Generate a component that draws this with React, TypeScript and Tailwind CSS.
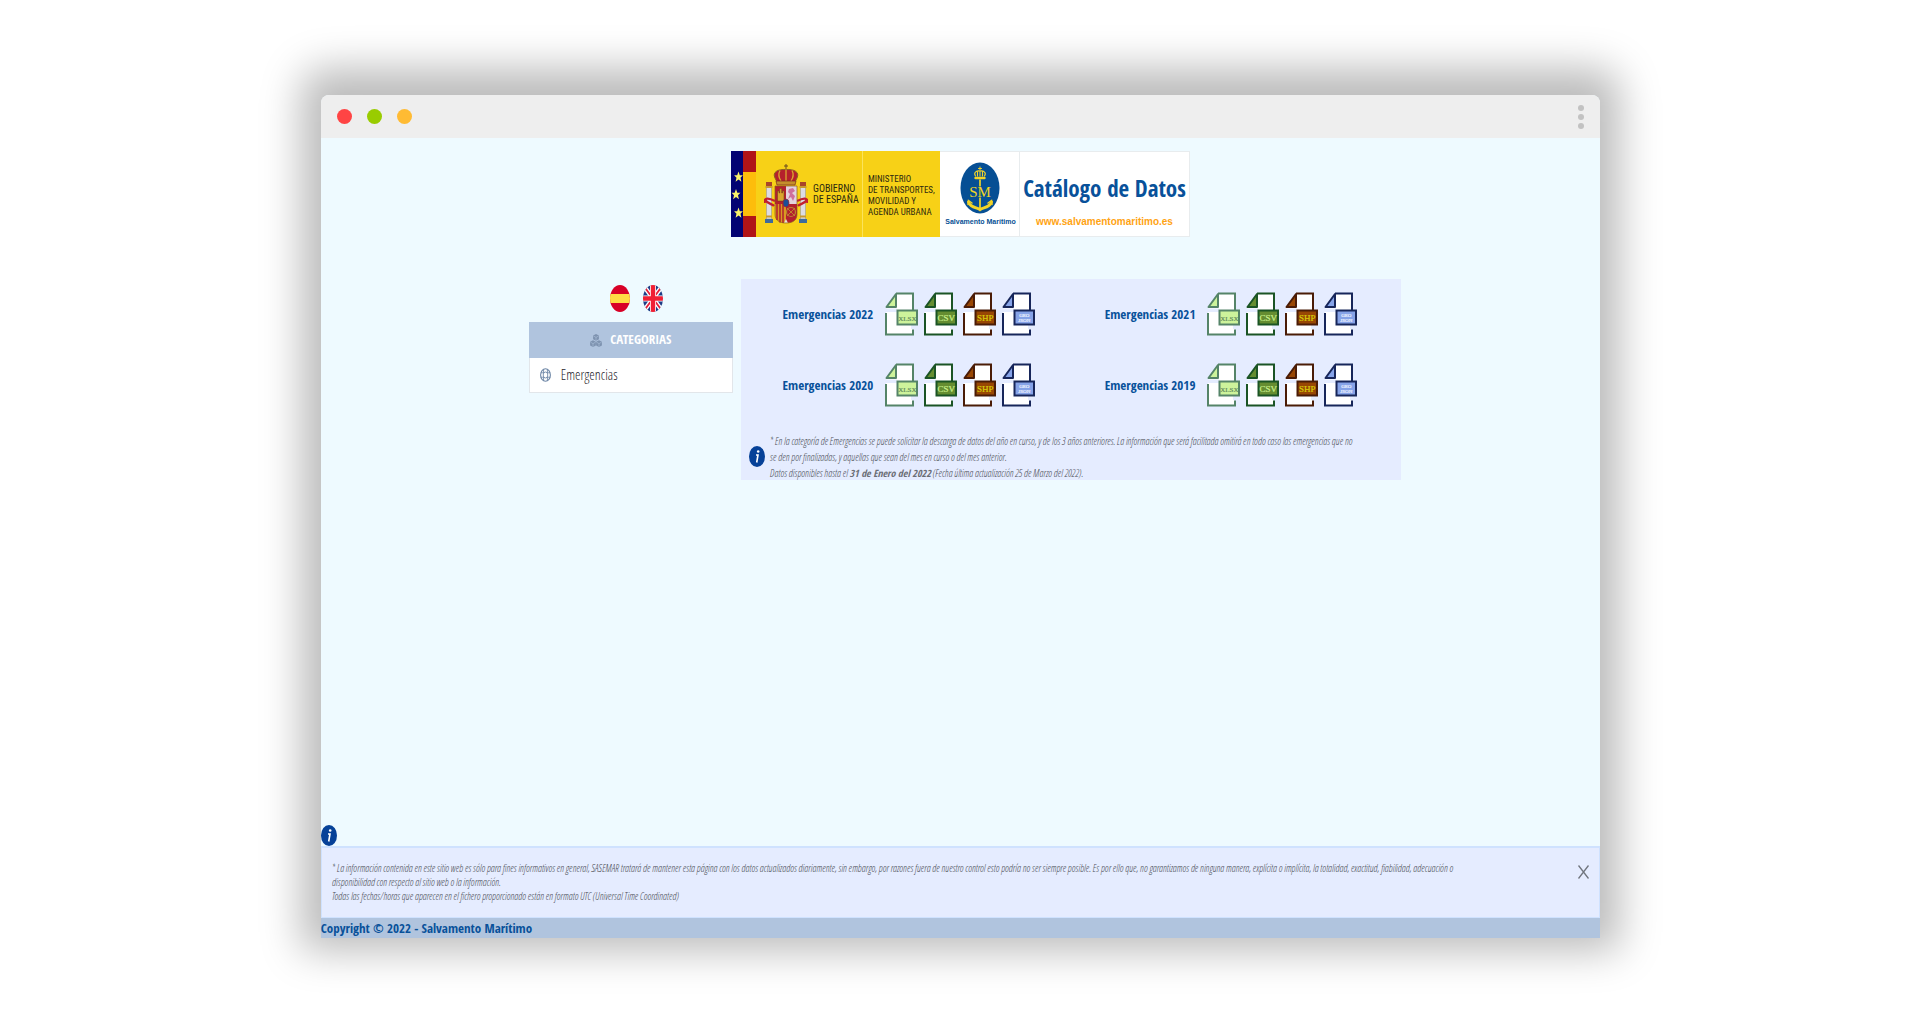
import React from "react";

const FORMATS = [
  { name: "XLSX", stroke: "#558468", fill: "#cdf39b", ink: "#5f8a5a", lines: ["XLSX"] },
  { name: "CSV", stroke: "#1b5425", fill: "#658d31", ink: "#c9f08e", lines: ["CSV"] },
  { name: "SHP", stroke: "#4a1c06", fill: "#984704", ink: "#d8cf0a", lines: ["SHP"] },
  { name: "GeoJSON", stroke: "#17265a", fill: "#86a3e8", ink: "#eef2ff", lines: ["GEO", "JSON"] },
];

const YEARS = [2022, 2021, 2020, 2019];

function FileIcon({ stroke, fill, ink, lines }: { stroke: string; fill: string; ink: string; lines: string[] }) {
  return (
    <svg viewBox="0 0 33 44" className="h-11 w-[33px]" aria-hidden="true">
      <path d="M1 42V17L11 1.500H28V42Z" fill="#fff" />
      <path d="M0 16.500H12V20H0ZM26 32H30V37H26Z" fill="#e5ecff" />
      <path d="M1 21V42.500H28V37.500" fill="none" stroke={stroke} strokeWidth="2" />
      <path d="M11 1.500H28V18" fill="none" stroke={stroke} strokeWidth="2" />
      <path d="M1.500 15L11 2V15Z" fill={fill} stroke={stroke} strokeWidth="2" strokeLinejoin="round" />
      <rect x="12.500" y="18.500" width="19.500" height="14" fill={fill} stroke={stroke} strokeWidth="2" />
      {lines.map((line, i) => (
        <text
          key={line}
          x="22.300"
          y={lines.length === 1 ? 29 : 25 + i * 5}
          textAnchor="middle"
          fill={ink}
          stroke={ink}
          strokeWidth="0.200"
          fontFamily="Liberation Serif, serif"
          fontSize={lines.length > 1 ? 5 : line.length > 3 ? 7 : 9}
        >
          {line}
        </text>
      ))}
    </svg>
  );
}

function InfoIcon() {
  return (
    <svg viewBox="0 0 16 21" className="h-[21px] w-4 shrink-0" aria-hidden="true">
      <ellipse cx="8" cy="10.500" rx="8" ry="10.500" fill="#064198" />
      <path d="M7 9H9L7.700 16.500" fill="none" stroke="#fff" strokeWidth="1.600" />
      <circle cx="9.200" cy="5.500" r="1.300" fill="#fff" />
    </svg>
  );
}

function CubesIcon() {
  const cube = "M0 -3.400L2.900 -1.800V1.800L0 3.400L-2.900 1.800V-1.800Z";
  const edges = "M-2.500 -1.400L0 0L2.500 -1.400M0 0V3";
  const spots = ["translate(6 3.400)", "translate(3 9.600)", "translate(9 9.600)"];
  return (
    <svg viewBox="0 0 12 13" className="h-[13px] w-3" aria-hidden="true">
      {spots.map((t) => (
        <g key={t} transform={t}>
          <path d={cube} fill="#7e93b0" />
          <path d={edges} fill="none" stroke="#b0c4de" strokeWidth=".6" />
        </g>
      ))}
    </svg>
  );
}

function LifebuoyIcon() {
  return (
    <svg viewBox="0 0 11 14" className="h-3.5 w-[11px]" aria-hidden="true" fill="none" stroke="#7189a8">
      <ellipse cx="5.500" cy="7" rx="4.900" ry="6.300" strokeWidth="1.100" />
      <ellipse cx="5.500" cy="7" rx="2.300" ry="3" strokeWidth=".9" />
      <path d="M3.600 1V5M7.400 1V5M3.600 9V13M7.400 9V13M.8 4.800H3.600M.8 9.200H3.600M7.400 4.800H10.200M7.400 9.200H10.200" strokeWidth=".9" />
    </svg>
  );
}

function SpainFlag() {
  return (
    <svg viewBox="0 0 20 27" className="h-[27px] w-5">
      <clipPath id="es"><ellipse cx="10" cy="13.500" rx="10" ry="13.500" /></clipPath>
      <g clipPath="url(#es)">
        <rect width="20" height="27" fill="#d80027" />
        <rect y="9" width="20" height="9" fill="#ffda44" />
      </g>
    </svg>
  );
}

function UkFlag() {
  return (
    <svg viewBox="0 0 20 27" className="h-[27px] w-5">
      <clipPath id="uk"><ellipse cx="10" cy="13.500" rx="10" ry="13.500" /></clipPath>
      <g clipPath="url(#uk)">
        <rect width="20" height="27" fill="#1d3c86" />
        <path d="M0 0L20 27M20 0L0 27" stroke="#fff" strokeWidth="4.500" />
        <path d="M0 0L20 27M20 0L0 27" stroke="#e8203a" strokeWidth="1.800" />
        <path d="M10 0V27M0 13.500H20" stroke="#fff" strokeWidth="6" />
        <path d="M10 0V27M0 13.500H20" stroke="#f01f34" strokeWidth="4.400" />
      </g>
    </svg>
  );
}

function FlagStrip() {
  const star = "M0 -5.500L1.300 -1.700H4.400L2 .8L2.900 4.800L0 2.500L-2.900 4.800L-2 .8L-4.400 -1.700H-1.300Z";
  return (
    <svg viewBox="0 0 25 86" className="h-[86px] w-[25px] shrink-0" aria-hidden="true">
      <rect width="12" height="86" fill="#020273" />
      <rect x="12" width="13" height="86" fill="#b01417" />
      <rect x="12" y="21" width="13" height="44" fill="#fdbd0b" />
      <g fill="#fbf36a">
        <path d={star} transform="translate(7.500 26)" />
        <path d={star} transform="translate(5 43.500)" />
        <path d={star} transform="translate(7.500 62)" />
      </g>
    </svg>
  );
}

function CoatOfArms() {
  return (
    <svg viewBox="0 0 44 62" className="h-[62px] w-11 shrink-0" aria-hidden="true">
      <path d="M22 1V7M20 3H24" stroke="#6b4a20" strokeWidth="1" />
      <path d="M11 15C8 9 14 6 22 6.500C30 6 36 9 33 15L31 19H13Z" fill="#b5202c" stroke="#8a6420" strokeWidth="1" />
      <path d="M22 6.500V18M16 7.500C14 11 15 15 17 18M28 7.500C30 11 29 15 27 18" fill="none" stroke="#d9a52e" strokeWidth="1.300" />
      <path d="M12 18H32L31 22H13Z" fill="#c58f2b" stroke="#7a2a20" strokeWidth=".7" />
      <g>
        <rect x="2.500" y="24" width="5" height="32" fill="#dcdce4" stroke="#8d8d96" strokeWidth=".5" />
        <rect x="36.500" y="24" width="5" height="32" fill="#dcdce4" stroke="#8d8d96" strokeWidth=".5" />
        <path d="M2 19H8V23H2ZM36 19H42V23H36Z" fill="#a8452a" />
        <path d="M1.500 23H8.500V25H1.500ZM35.500 23H42.500V25H35.500ZM2 52.500H8V54.500H2ZM36 52.500H42V54.500H36Z" fill="#c99a30" />
        <path d="M1 56H9V60H1ZM35 56H43V60H35Z" fill="#3d6b9e" />
        <path d="M.5 40C0 34 5 35 11 38M43.500 40C44 34 39 35 33 38M1 37C4 41 8 41 10 43M43 37C40 41 36 41 34 43" fill="none" stroke="#c2202f" strokeWidth="2.400" />
      </g>
      <path d="M11 23H22V41H11Z" fill="#b3202e" />
      <path d="M22 23H33V41H22Z" fill="#e3d3dd" />
      <path d="M11 41H22V60C15 60 11 57 11 51Z" fill="#d99a22" />
      <path d="M22 41H33V51C33 57 29 60 22 60Z" fill="#b3202e" />
      <path d="M13 41V57M16 41V59.500M19 41V60" stroke="#b3202e" strokeWidth="1.500" />
      <path d="M13.500 38V28H15V30H15.700V25.500H17.700V30H18.500V28H20V38Z" fill="#d9a52e" stroke="#6a4010" strokeWidth=".5" />
      <path d="M25 26L29 25L31 28L28 30L31 33L29 38L27 34L24 36L26 31L24 29Z" fill="#cf6f9c" />
      <circle cx="27" cy="49" r="4.500" fill="none" stroke="#b98530" strokeWidth="1.200" />
      <path d="M23 45L31 53M31 45L23 53" stroke="#c28a2e" strokeWidth=".9" />
      <path d="M22 56L24 60H20Z" fill="#e8e2d0" />
      <ellipse cx="22" cy="40" rx="3" ry="4" fill="#1c4f98" stroke="#9c2530" strokeWidth=".7" />
      <path d="M11 23H33V51C33 57 29 60 22 60C15 60 11 57 11 51Z" fill="none" stroke="#8a5a20" strokeWidth=".7" />
    </svg>
  );
}

function RescueEmblem() {
  return (
    <svg viewBox="0 0 40 52" className="h-[52px] w-10" aria-hidden="true">
      <ellipse cx="20" cy="26" rx="19.500" ry="25.500" fill="#064f94" />
      <g fill="none" stroke="#f2d427" strokeLinecap="round">
        <path d="M20 5V8M18.500 6.500H21.500" strokeWidth="1" />
        <path d="M15.500 14C13 10 17 8.500 20 9C23 8.500 27 10 24.500 14M20 9V14M17.500 9.500V14M22.500 9.500V14" strokeWidth="1.100" />
        <path d="M15.500 16H24.500" strokeWidth="2.400" />
        <path d="M20 18V46" strokeWidth="1.700" />
        <path d="M8.500 40C11 46.500 17 45 20 47.500C23 45 29 46.500 31.500 40" strokeWidth="3" />
        <path d="M8 42.500L8.500 38.500L12 41M32 42.500L31.500 38.500L28 41" strokeWidth="1.500" />
      </g>
      <text x="20" y="35" fontSize="15" fill="#f2d427" stroke="#064f94" strokeWidth="1" paintOrder="stroke" fontFamily="Liberation Serif, serif" textAnchor="middle">SM</text>
    </svg>
  );
}

function Banner() {
  return (
    <header className="mx-auto mt-[13px] flex h-[86px] bg-white">
      <div className="flex bg-[#f7d117]">
        <FlagStrip />
        <div className="flex items-center pl-2">
          <CoatOfArms />
        </div>
        <div className="flex w-[55px] items-center border-r border-[#fbe35c] pl-[5px] font-['Roboto_Condensed'] text-[10px] leading-[11px] text-[#2d2a10]">
          <p className="whitespace-nowrap">GOBIERNO<br />DE ESPAÑA</p>
        </div>
        <div className="flex w-[77px] items-center pl-[5px] pt-1 font-['Roboto_Condensed'] text-[9px] leading-[11px] text-[#2d2a10]">
          <p className="whitespace-nowrap">MINISTERIO<br />DE TRANSPORTES,<br />MOVILIDAD Y<br />AGENDA URBANA</p>
        </div>
      </div>
      <div className="flex w-[80px] flex-col items-center border-y border-r border-[#e8ecee] pl-0.5 pt-2.5">
        <RescueEmblem />
        <p className="whitespace-nowrap font-['Liberation_Sans'] text-[7px] font-bold leading-4 text-[#064f94]">Salvamento Marítimo</p>
      </div>
      <div className="flex w-[170px] flex-col items-center border-y border-r border-[#e8ecee] pt-[22px]">
        <h1 className="whitespace-nowrap text-[23px] font-bold leading-7 text-[#08519a]">Catálogo de Datos</h1>
        <a href="#sitio" className="mt-3 font-['Liberation_Sans'] text-[10px] font-bold leading-4 text-[#ffa313]">www.salvamentomaritimo.es</a>
      </div>
    </header>
  );
}

function Sidebar() {
  return (
    <nav className="w-[204px] shrink-0">
      <div className="mb-[10px] mt-[6px] flex h-[27px] justify-center gap-[13px] pl-3">
        <button aria-label="Español"><SpainFlag /></button>
        <button aria-label="English"><UkFlag /></button>
      </div>
      <h2 className="flex h-9 items-center justify-center gap-2 bg-[#b0c4de] text-[13px] font-bold text-white">
        <CubesIcon />
        CATEGORIAS
      </h2>
      <a href="#emergencias" className="flex h-[35px] items-center gap-2.5 border border-t-0 border-[#e2e6ea] bg-white px-2.5 font-['Open_Sans_Condensed_Light'] text-sm text-[#1f252c]">
        <LifebuoyIcon />
        Emergencias
      </a>
    </nav>
  );
}

function YearDownloads({ year }: { year: number }) {
  return (
    <div className="flex h-[71px] items-center justify-center gap-3">
      <h3 className="whitespace-nowrap text-[13px] font-bold text-[#08519a]">Emergencias {year}</h3>
      <div className="flex gap-1.5 pb-0.5">
        {FORMATS.map((f) => (
          <button key={f.name} aria-label={`Emergencias ${year} ${f.name}`}>
            <FileIcon stroke={f.stroke} fill={f.fill} ink={f.ink} lines={f.lines} />
          </button>
        ))}
      </div>
    </div>
  );
}

export default function App() {
  return (
    <div className="flex min-h-screen flex-col bg-white pb-20 pl-px pt-[95px]">
      <div className="mx-auto flex w-2/3 flex-1 flex-col rounded-t-lg bg-[#eefaff] font-['Open_Sans_Condensed','Open_Sans',sans-serif] shadow-[0_-7px_40px_20px_rgba(0,0,0,0.265)]">
        <div className="flex h-[43px] items-center justify-between rounded-t-lg bg-[#eeeeee] px-4">
          <div className="flex gap-[15px]">
            <span className="size-[15px] rounded-full bg-[#ff4444]" />
            <span className="size-[15px] rounded-full bg-[#99cc00]" />
            <span className="size-[15px] rounded-full bg-[#ffbb33]" />
          </div>
          <button aria-label="Menú" className="flex flex-col gap-[3px]">
            <span className="size-1.5 rounded-full bg-[#c2c2c2]" />
            <span className="size-1.5 rounded-full bg-[#c2c2c2]" />
            <span className="size-1.5 rounded-full bg-[#c2c2c2]" />
          </button>
        </div>

        <Banner />

        <main className="mt-[42px] flex flex-1 items-start gap-2 pl-[208px] pr-[199px]">
          <Sidebar />
          <section className="flex-1 bg-[#e5ecff]">
            <div className="grid grid-cols-2 pl-[7px] pr-[9px]">
              {YEARS.map((y) => <YearDownloads key={y} year={y} />)}
            </div>
            <div className="flex h-[59px] items-center gap-[5px] pl-2 pr-11 pt-3">
              <InfoIcon />
              <div className="font-['Open_Sans_Condensed_Light'] text-[10px] italic leading-4 text-[#4a4d55]">
                <p>* En la categoría de Emergencias se puede solicitar la descarga de datos del año en curso, y de los 3 años anteriores. La información que será facilitada omitirá en todo caso las emergencias que no se den por finalizadas, y aquellas que sean del mes en curso o del mes anterior.</p>
                <p>Datos disponibles hasta el <b className="font-['Open_Sans_Condensed'] text-[#6a6d75]">31 de Enero del 2022</b> (Fecha última actualización 25 de Marzo del 2022).</p>
              </div>
            </div>
          </section>
        </main>

        <footer>
          <InfoIcon />
          <div className="flex h-[72px] items-start gap-28 border border-t-2 border-[#cfe2ff] bg-[#e5ecff] px-2.5 pt-[13px]">
            <div className="flex-1 font-['Open_Sans_Condensed_Light'] text-[10px] italic leading-[14px] text-[#4a4d55]">
              <p>* La información contenida en este sitio web es sólo para fines informativos en general, SASEMAR tratará de mantener esta página con los datos actualizados diariamente, sin embargo, por razones fuera de nuestro control esto podría no ser siempre posible. Es por ello que, no garantizamos de ninguna manera, explícita o implícita, la totalidad, exactitud, fiabilidad, adecuación o disponibilidad con respecto al sitio web o la información.</p>
              <p>Todas las fechas/horas que aparecen en el fichero proporcionado están en formato UTC (Universal Time Coordinated)</p>
            </div>
            <button aria-label="Cerrar" className="mt-1">
              <svg viewBox="0 0 11 14" className="h-3.5 w-[11px]">
                <path d="M.5 .5L10.500 13.500M10.500 .5L.5 13.500" stroke="#70757e" strokeWidth="1.300" />
              </svg>
            </button>
          </div>
          <p className="h-5 bg-[#b0c4de] text-[13px] font-bold leading-5 text-[#08519a]">Copyright © 2022 - Salvamento Marítimo</p>
        </footer>
      </div>
    </div>
  );
}
